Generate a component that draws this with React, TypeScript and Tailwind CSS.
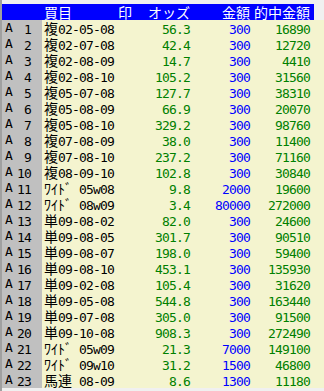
import React from "react";

type Row = [string, string, string, string];

const rows: Row[] = [
  ["複02-05-08", "56.3", "300", "16890"],
  ["複02-07-08", "42.4", "300", "12720"],
  ["複02-08-09", "14.7", "300", "4410"],
  ["複02-08-10", "105.2", "300", "31560"],
  ["複05-07-08", "127.7", "300", "38310"],
  ["複05-08-09", "66.9", "300", "20070"],
  ["複05-08-10", "329.2", "300", "98760"],
  ["複07-08-09", "38.0", "300", "11400"],
  ["複07-08-10", "237.2", "300", "71160"],
  ["複08-09-10", "102.8", "300", "30840"],
  ["ﾜｲﾄﾞ 05w08", "9.8", "2000", "19600"],
  ["ﾜｲﾄﾞ 08w09", "3.4", "80000", "272000"],
  ["単09-08-02", "82.0", "300", "24600"],
  ["単09-08-05", "301.7", "300", "90510"],
  ["単09-08-07", "198.0", "300", "59400"],
  ["単09-08-10", "453.1", "300", "135930"],
  ["単09-02-08", "105.4", "300", "31620"],
  ["単09-05-08", "544.8", "300", "163440"],
  ["単09-07-08", "305.0", "300", "91500"],
  ["単09-10-08", "908.3", "300", "272490"],
  ["ﾜｲﾄﾞ 05w09", "21.3", "7000", "149100"],
  ["ﾜｲﾄﾞ 09w10", "31.2", "1500", "46800"],
  ["馬連 08-09", "8.6", "1300", "11180"],
];

function T({ s }: { s: string }) {
  const parts: { a: boolean; t: string }[] = [];
  for (const ch of s) {
    const a = ch.charCodeAt(0) < 128;
    const last = parts[parts.length - 1];
    if (last && last.a === a) last.t += ch;
    else parts.push({ a, t: ch });
  }
  return (
    <>
      {parts.map((p, i) =>
        p.a ? (
          <span
            key={i}
            className="font-['DejaVu_Sans_Mono',monospace] text-[13px] tracking-[-0.83px] whitespace-pre"
          >
            {p.t}
          </span>
        ) : (
          <span
            key={i}
            className="font-['Noto_Sans_CJK_JP',sans-serif] text-[14px] tracking-normal whitespace-pre"
          >
            {p.t}
          </span>
        )
      )}
    </>
  );
}

export default function App() {
  return (
    <div className="w-[324px] h-[391px] bg-[#f0f0f0] overflow-hidden border-l-2 border-[#a0a0a0] pt-[4px]">
      <div className="flex h-[16px] leading-[16px]">
        <div className="flex w-[312px] bg-[#0000ff] text-white">
          <div className="w-[40px]" />
          <div className="w-[76px] pl-[2px]">
            <T s="買目" />
          </div>
          <div className="w-[14px]">
            <T s="印" />
          </div>
          <div className="w[58px] w-[58px] text-right">
            <T s="オッズ" />
          </div>
          <div className="w-[60px] text-right">
            <T s="金額" />
          </div>
          <div className="w-[60px] text-right">
            <T s="的中金額" />
          </div>
        </div>
      </div>
      {rows.map((r, i) => (
        <div key={i} className="flex h-[16px] leading-[16px]">
          <div className="w-[40px] bg-[#c0c0c0] text-black flex pl-[3px] pr-[11px]">
            <T s="A" />
            <div className="flex-1 text-right">
              <T s={String(i + 1)} />
            </div>
          </div>
          <div className="flex flex-1 bg-[#f4f4cf]">
            <div className="w-[76px] pl-[2px] text-black">
              <T s={r[0]} />
            </div>
            <div className="w-[14px]" />
            <div className="w-[58px] text-right text-[#008000]">
              <T s={r[1]} />
            </div>
            <div className="w-[60px] text-right text-[#0000ff]">
              <T s={r[2]} />
            </div>
            <div className="w-[60px] text-right text-[#008000]">
              <T s={r[3]} />
            </div>
          </div>
        </div>
      ))}
    </div>
  );
}
